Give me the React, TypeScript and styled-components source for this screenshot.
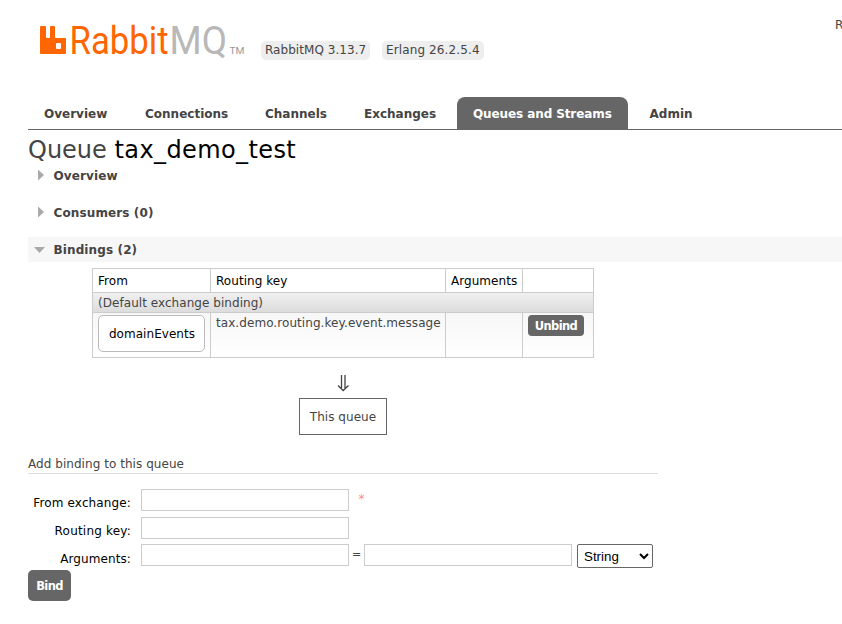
import React from "react";
import styled, { createGlobalStyle, css } from "styled-components";

const GlobalStyle = createGlobalStyle`
  * { box-sizing: border-box; }
  html, body { margin: 0; background: #fff; overflow: hidden; }
  body { font: 12px/16px Verdana, "DejaVu Sans", sans-serif; color: #444; }
`;

const Page = styled.div`
  width: 842px;
  height: 624px;
  overflow: hidden;
  padding-left: 28px;
  display: flex;
  flex-direction: column;
`;

const Label = styled.span<{ $track?: number }>`
  white-space: nowrap;
  letter-spacing: ${(p) => p.$track ?? 0.05}px;
`;

const Header = styled.header`
  height: 97px;
  display: flex;
  align-items: flex-start;
`;

const Logo = styled.svg`
  display: block;
  width: 222px;
  height: 66px;
  flex: none;
  font-family: Roboto, sans-serif;
`;

const Version = styled.div<{ $width: number }>`
  width: ${(p) => p.$width}px;
  height: 19px;
  margin: 41px 12px 0 0;
  margin-left: ${(p) => (p.$width > 105 ? 11 : 0)}px;
  padding-left: 4px;
  line-height: 19px;
  border-radius: 5px;
  background: #eee;
  flex: none;
`;

const Refreshed = styled.div`
  margin: 17px 0 0 auto;
  width: 7px;
  white-space: nowrap;
`;

const Tabs = styled.nav`
  height: 33px;
  flex: none;
  display: flex;
  border-bottom: 1px solid #666;
`;

const Tab = styled.a<{ $width: number; $active?: boolean }>`
  width: ${(p) => p.$width}px;
  height: 32px;
  padding-left: 16px;
  font-size: 12px;
  line-height: 34px;
  font-weight: bold;
  border-radius: 8px 8px 0 0;
  ${(p) =>
    p.$active &&
    css`
      color: #fff;
      background: #666;
      margin-right: 5.5px;
    `}
`;

const Title = styled.h1`
  margin: 0;
  height: 33px;
  flex: none;
  padding-top: 4px;
  font-size: 24px;
  line-height: 32px;
  font-weight: normal;
  b { font-weight: normal; color: #000; }
`;

const Section = styled.h2<{ $open?: boolean }>`
  margin: 0 0 12px;
  height: 25px;
  flex: none;
  display: flex;
  align-items: center;
  font-size: 12px;
  ${(p) =>
    p.$open &&
    css`
      background: #f7f7f7;
      margin-bottom: 6px;
    `}
`;

const Arrow = styled.svg`
  width: 25.5px;
  height: 25px;
  flex: none;
`;

const Bindings = styled.div`
  width: 502px;
  height: 90px;
  flex: none;
  margin-left: 64px;
  display: grid;
  grid-template-columns: 118px 235px 77px 71px;
  grid-template-rows: 24px 20px 45px;
  border: solid #ccc;
  border-width: 1px 0 0 1px;
`;

const Cell = styled.div<{ $kind?: "head" | "wide" }>`
  padding: 2px 0 0 5px;
  border: solid #ccc;
  border-width: 0 1px 1px 0;
  background: linear-gradient(#f7f7f7, #fff);
  ${(p) => p.$kind === "head" && css`color: #000; padding-top: 4px; background: #fff;`}
  ${(p) => p.$kind === "wide" && css`grid-column: 1 / -1; background: linear-gradient(#f0f0f0, #dcdcdc);`}
`;

const Exchange = styled.a`
  display: block;
  width: 107px;
  height: 37px;
  border: 1px solid #bbb;
  border-radius: 5px;
  background: #fff;
  color: #000;
  text-align: center;
  line-height: 37px;
  padding-left: 1px;
`;

const Button = styled.button<{ $small?: boolean }>`
  display: block;
  flex: none;
  width: ${(p) => (p.$small ? 56 : 43)}px;
  height: ${(p) => (p.$small ? 21 : 31)}px;
  padding: 0;
  border: 0;
  border-radius: ${(p) => (p.$small ? 4 : 5)}px;
  background: #666;
  color: #fff;
  font: bold 11.5px Verdana, "DejaVu Sans", sans-serif;
`;

const Target = styled.div`
  width: 88px;
  margin-left: 271px;
  height: 77px;
  flex: none;
  display: flex;
  flex-direction: column;
  align-items: center;
`;

const DownArrow = styled.svg`
  width: 14px;
  height: 18px;
  margin: 17px 0 5px;
  flex: none;
`;

const Queue = styled.div`
  width: 88px;
  height: 37px;
  flex: none;
  border: 1px solid #666;
  line-height: 37px;
  text-align: center;
`;

const FormTitle = styled.h3`
  margin: 20px 0 15px;
  width: 630px;
  height: 19px;
  flex: none;
  font-size: 12px;
  line-height: 19px;
  font-weight: normal;
  border-bottom: 1px solid #ddd;
`;

const FormRow = styled.label<{ $height?: number }>`
  height: ${(p) => p.$height ?? 28}px;
  flex: none;
  display: flex;
  align-items: flex-start;
`;

const Caption = styled.span<{ $top?: number }>`
  width: 113px;
  padding: ${(p) => p.$top ?? 6}px 10px 0 0;
  text-align: right;
  color: #000;
  white-space: nowrap;
`;

const Input = styled.input`
  width: 208px;
  height: 22px;
  padding: 3px;
  border: 1px solid #ccc;
  background: #fff;
`;

const Required = styled.span`
  padding: 2px 0 0 9.5px;
  font-size: 12px;
  color: #f88;
`;

const Equals = styled.span`
  width: 15px;
  padding-top: 3px;
  text-align: center;
  font-size: 11px;
`;

const Select = styled.select`
  width: 76px;
  height: 24px;
  margin-left: 5px;
  padding: 0 0 0 2px;
  border: 1px solid #666;
  border-radius: 2px;
  background: #fff;
  color: #000;
  font: 13.333px "Liberation Sans", Arial, sans-serif;
`;

const tabs = [
  { name: "Overview", width: 101 },
  { name: "Connections", width: 120 },
  { name: "Channels", width: 99 },
  { name: "Exchanges", width: 109 },
  { name: "Queues and Streams", width: 171, active: true },
  { name: "Admin", width: 76 },
];

function SectionHeading({ title, open }: { title: string; open?: boolean }) {
  return (
    <Section $open={open}>
      <Arrow viewBox="0 0 25.5 25">
        <path d={open ? "M6 10h11l-5.5 6z" : "M10 6.500v11l6-5.500z"} fill="#aaa" />
      </Arrow>
      <Label $track={0.12}>{title}</Label>
    </Section>
  );
}

export default function App() {
  return (
    <>
      <GlobalStyle />
      <Page>
        <Header>
          <Logo viewBox="28 0 222 66" aria-label="RabbitMQ">
            <path
              fill="#f60"
              fillRule="evenodd"
              d="M41 26h4q1 0 1 1v10q0 1 1 1h2q1 0 1-1V27q0-1 1-1h3q1 0 1 1v10q0 1 1 1h9q1 0 1 1v14q0 1-1 1H41q-1 0-1-1V27q0-1 1-1zM57 43q-1 0-1 1v4q0 1 1 1h3q1 0 1-1v-4q0-1-1-1z"
            />
            <text x="69.5" y="54" fontSize="38" fill="#f60" textLength="99" lengthAdjust="spacingAndGlyphs">Rabbit</text>
            <text x="169.500" y="54" fontSize="38" fill="#b8b8b8" textLength="57.500" lengthAdjust="spacingAndGlyphs">MQ</text>
            <text x="229.5" y="53.5" fontSize="9" fill="#999" textLength="15" lengthAdjust="spacingAndGlyphs">TM</text>
          </Logo>
          <Version $width={109}><Label>RabbitMQ 3.13.7</Label></Version>
          <Version $width={102}><Label $track={0.12}>Erlang 26.2.5.4</Label></Version>
          <Refreshed>Refreshed</Refreshed>
        </Header>
        <Tabs>
          {tabs.map((t) => (
            <Tab key={t.name} $width={t.width} $active={t.active}>
              <Label $track={t.active ? -0.1 : 0}>{t.name}</Label>
            </Tab>
          ))}
        </Tabs>
        <Title><Label $track={0}>Queue </Label><b><Label $track={0.4}>tax_demo_test</Label></b></Title>
        <SectionHeading title="Overview" />
        <SectionHeading title="Consumers (0)" />
        <SectionHeading title="Bindings (2)" open />
        <Bindings>
          <Cell $kind="head"><Label>From</Label></Cell>
          <Cell $kind="head"><Label>Routing key</Label></Cell>
          <Cell $kind="head"><Label>Arguments</Label></Cell>
          <Cell $kind="head" />
          <Cell $kind="wide"><Label>(Default exchange binding)</Label></Cell>
          <Cell><Exchange><Label>domainEvents</Label></Exchange></Cell>
          <Cell><Label $track={0.07}>tax.demo.routing.key.event.message</Label></Cell>
          <Cell />
          <Cell><Button $small><Label $track={-0.6}>Unbind</Label></Button></Cell>
        </Bindings>
        <Target>
          <DownArrow viewBox="0 0 14 18">
            <path d="M5.500 0v13M9 0v13M2 10.500 7.200 15.500l5.200-5" fill="none" stroke="#444" strokeWidth="1.300" />
          </DownArrow>
          <Queue><Label>This queue</Label></Queue>
        </Target>
        <FormTitle><Label>Add binding to this queue</Label></FormTitle>
        <FormRow>
          <Caption><Label $track={0.13}>From exchange:</Label></Caption>
          <Input />
          <Required>*</Required>
        </FormRow>
        <FormRow $height={27}>
          <Caption><Label $track={0.2}>Routing key:</Label></Caption>
          <Input />
        </FormRow>
        <FormRow $height={26}>
          <Caption $top={7}><Label $track={0.1}>Arguments:</Label></Caption>
          <Input />
          <Equals>=</Equals>
          <Input />
          <Select defaultValue="String"><option>String</option></Select>
        </FormRow>
        <Button><Label $track={-0.6}>Bind</Label></Button>
      </Page>
    </>
  );
}
